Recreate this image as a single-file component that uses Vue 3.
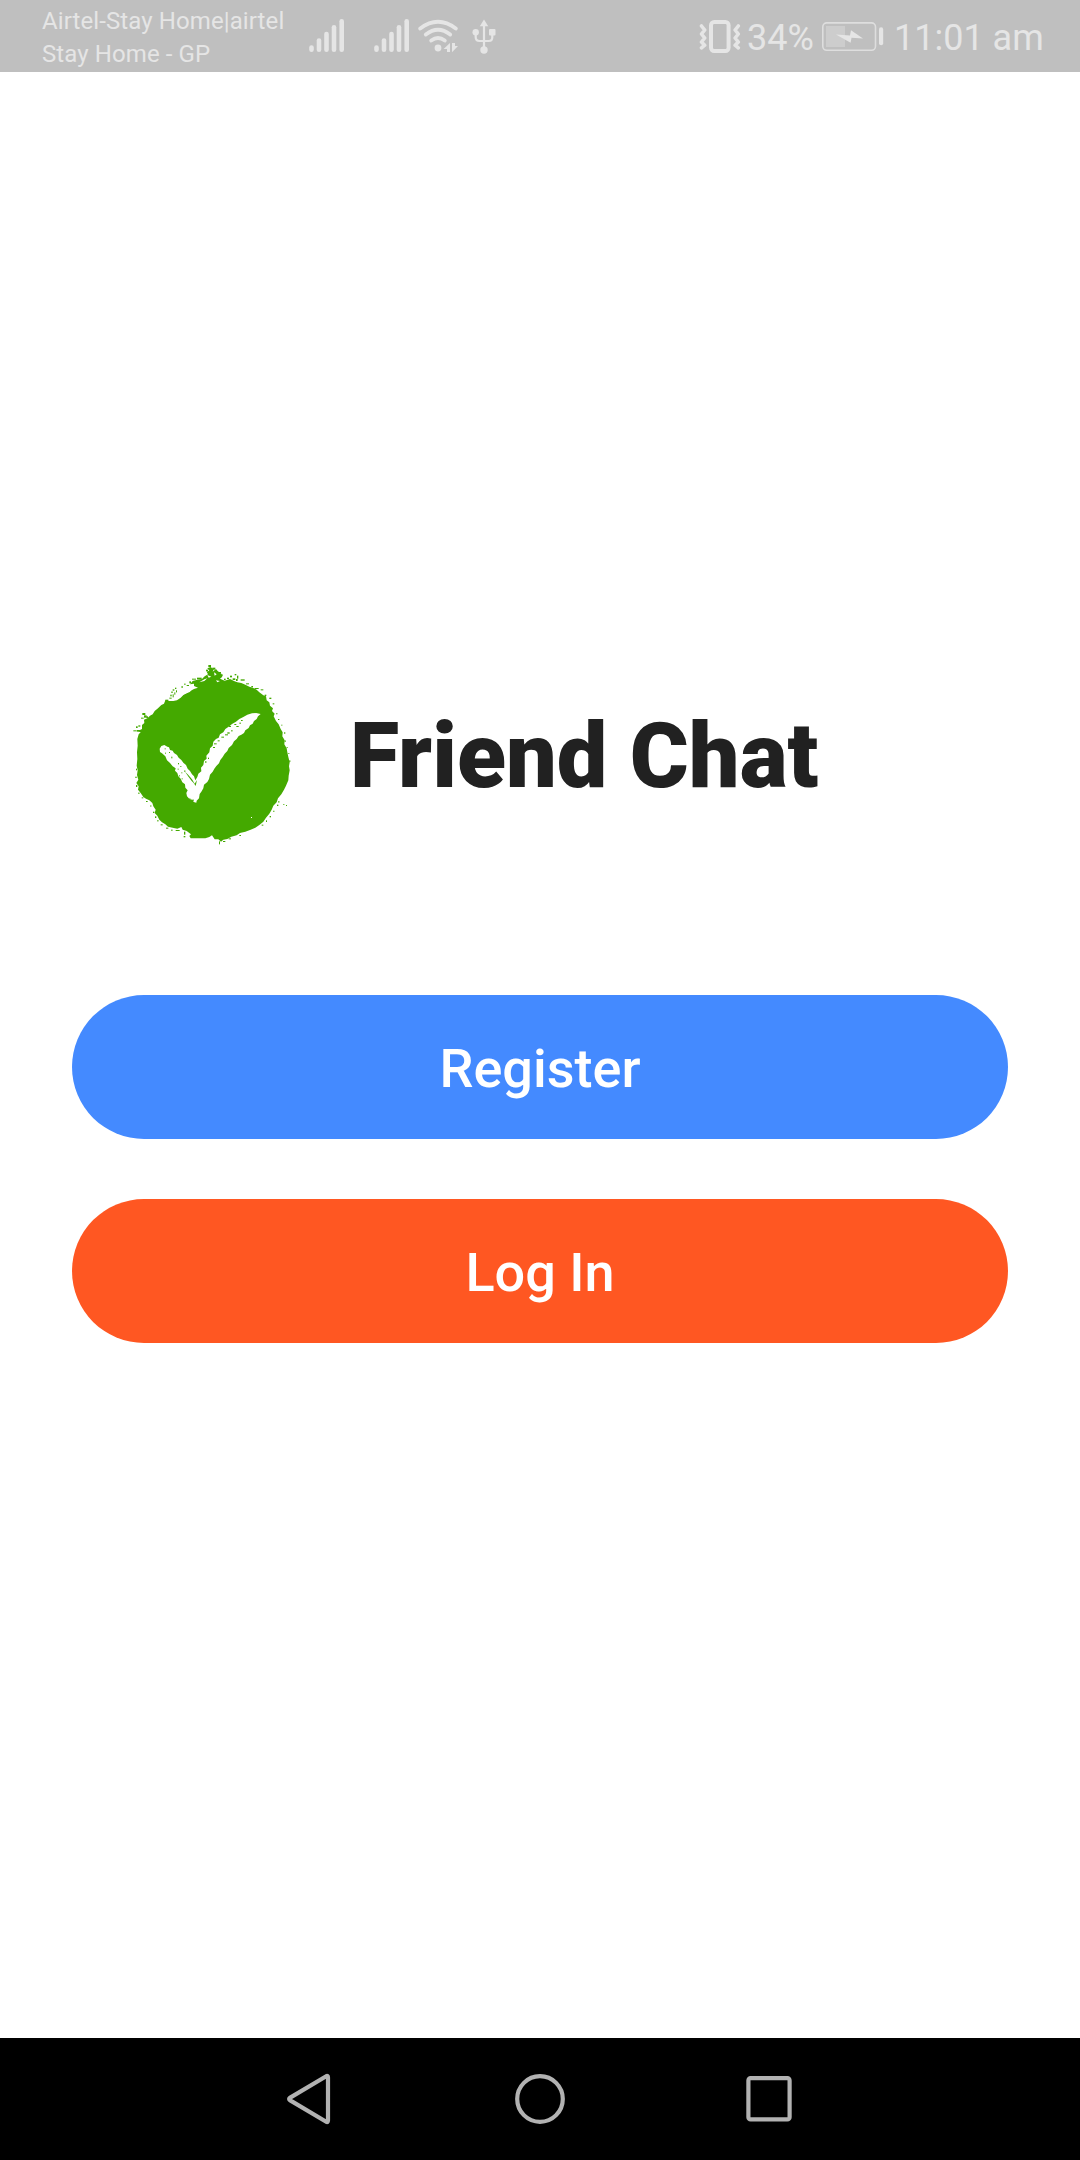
<script setup>
const signalBars = [
  { x: 2.5, top: 47.5 },
  { x: 10, top: 40.5 },
  { x: 17.5, top: 34 },
  { x: 25, top: 27.2 },
  { x: 32.7, top: 21.2 },
]

// Paint specks around the brushed badge: x, y, width, height
const specks = [
  [265, 30, 8, 6], [277, 38, 9, 6], [258, 44, 6, 5], [344, 57, 5, 4], [351, 62, 4, 9],
  [330, 62, 6, 5], [362, 73, 12, 4], [378, 85, 9, 3], [394, 93, 5, 4], [404, 99, 12, 3],
  [422, 103, 8, 3], [434, 119, 5, 4], [448, 128, 6, 4], [458, 145, 5, 3], [184, 94, 5, 4],
  [192, 86, 5, 3], [200, 90, 7, 3], [216, 71, 12, 3], [231, 68, 14, 5], [208, 79, 5, 6],
  [153, 110, 6, 3], [158, 103, 5, 4], [165, 98, 4, 4], [151, 119, 4, 5], [148, 128, 7, 3],
  [136, 134, 9, 4], [158, 118, 3, 9], [163, 112, 3, 7], [168, 106, 3, 6], [67, 174, 9, 6],
  [72, 181, 8, 7], [63, 188, 8, 3], [79, 184, 5, 5], [48, 214, 5, 5], [40, 226, 9, 3],
  [50, 225, 10, 5], [55, 211, 6, 4], [492, 232, 4, 4], [494, 256, 3, 5], [500, 276, 3, 3],
  [505, 294, 3, 3], [508, 316, 3, 5], [48, 341, 3, 5], [46, 365, 4, 4], [48, 390, 4, 6],
  [54, 413, 5, 3], [65, 427, 5, 3], [78, 438, 5, 3], [91, 451, 3, 4], [99, 470, 4, 4],
  [105, 484, 4, 5], [111, 496, 5, 3], [122, 508, 6, 3], [138, 518, 7, 3], [153, 524, 5, 3],
  [167, 525, 12, 3], [192, 530, 4, 9], [191, 543, 5, 4], [297, 559, 3, 9], [309, 558, 7, 3],
  [326, 550, 7, 3], [358, 540, 5, 3], [425, 509, 5, 3], [438, 496, 3, 5], [449, 483, 4, 4],
  [460, 467, 3, 4], [471, 449, 4, 4], [475, 438, 3, 5], [490, 447, 3, 3], [498, 450, 3, 3],
  [469, 174, 3, 4], [474, 192, 4, 3], [484, 209, 3, 3], [297, 51, 6, 4], [303, 58, 5, 5],
  [312, 71, 5, 4], [321, 68, 6, 4], [338, 70, 8, 5], [348, 72, 5, 6],
]

// Dry-brush paint left inside the tick
const grain = [
  [134, 280, 3, 3], [135, 293, 3, 3], [147, 291, 3, 3], [154, 305, 3, 5], [174, 324, 3, 4],
  [181, 333, 3, 3], [173, 341, 3, 3], [184, 352, 3, 3], [193, 346, 3, 5], [177, 361, 3, 3],
  [185, 370, 3, 3], [208, 430, 3, 5], [218, 434, 4, 3],
  [256, 318, 3, 6], [264, 308, 3, 4], [279, 276, 6, 3], [282, 265, 8, 3],
  [293, 256, 6, 3], [304, 245, 8, 3], [315, 238, 9, 3], [322, 232, 7, 4], [333, 226, 5, 3],
  [327, 213, 6, 3], [343, 207, 6, 3], [349, 213, 7, 3], [358, 203, 5, 3], [363, 195, 5, 3],
]
</script>

<template>
  <div class="screen">
    <header class="status">
      <div class="carrier">Airtel-Stay Home|airtel<br />Stay Home - GP</div>
      <svg class="signal" width="38" height="72" viewBox="0 0 38 72">
        <line v-for="b in signalBars" :key="b.x" :x1="b.x" :x2="b.x" :y1="b.top" y2="49.8" />
      </svg>
      <svg class="signal second" width="38" height="72" viewBox="0 0 38 72">
        <line v-for="b in signalBars" :key="b.x" :x1="b.x" :x2="b.x" :y1="b.top" y2="49.8" />
      </svg>
      <svg class="wifi" width="42" height="72" viewBox="0 0 42 72">
        <g fill="none" stroke="#e5e5e5" stroke-width="3.8" stroke-linecap="round">
          <path d="M2.2 28.5Q20 15 37.8 28.5" />
          <path d="M7.8 34.5Q20 25 32.2 34.5" />
          <path d="M13.2 40.5Q20 35.5 26.8 40.5" />
        </g>
        <circle cx="20" cy="48" r="3.4" fill="#e5e5e5" />
        <path d="M32 43v9h-3v-3H25.6zM34 43h3v3H40l-6 6.2z" fill="#e5e5e5" />
      </svg>
      <svg class="usb" width="24" height="72" viewBox="0 0 24 72">
        <path d="M12 19.5l4.2 6.8H7.8z" fill="#e5e5e5" />
        <path d="M12 25v24M3.7 33v4.2q0 3.8 4 3.8h9q3.6 0 3.6-3.8V33" fill="none" stroke="#e5e5e5" stroke-width="2.2" />
        <circle cx="12" cy="50" r="3.7" fill="#e5e5e5" />
        <circle cx="3.7" cy="32.2" r="3.2" fill="#e5e5e5" />
        <rect x="17" y="29" width="6.5" height="6.5" rx="1" fill="#e5e5e5" />
      </svg>
      <div class="right">
        <svg class="vibrate" width="48" height="72" viewBox="0 0 48 72">
          <rect x="12" y="22" width="17.6" height="29" rx="3.2" fill="none" stroke="#e5e5e5" stroke-width="4" />
          <path d="M2.5 26l3.2 4-3.2 4 3.2 4-3.2 4 3.2 3.2-3.2 2.6M39.3 26l-3.2 4 3.2 4-3.2 4 3.2 4-3.2 3.2 3.2 2.6" fill="none" stroke="#e5e5e5" stroke-width="3.6" stroke-linecap="round" stroke-linejoin="round" />
        </svg>
        <span class="percent">34%</span>
        <svg class="battery" width="62" height="72" viewBox="0 0 62 72">
          <rect x="0.8" y="22.9" width="52.7" height="27.4" rx="4" fill="none" stroke="#dedede" stroke-width="1.6" />
          <rect x="4" y="26" width="19" height="21" fill="#cdcdcd" />
          <path d="M14 34.5l14 1 1-5.3 12 8.3-11.5-.7-.9 5z" fill="#e5e5e5" />
          <rect x="57" y="27.3" width="4.2" height="18" rx="2.1" fill="#e5e5e5" />
        </svg>
        <span class="clock">11:01 am</span>
      </div>
    </header>

    <main class="welcome">
      <div class="brand">
        <svg class="badge" width="180" height="200" viewBox="0 0 540 600">
          <path
            fill="#44a900"
            d="M262 40L272 36 281 43 278 50 288 42 293 48 304 56 307 65 300 71 314 77 330 72 342 78 352 82 364 84 376 89 388 95 398 98 410 104 418 112 430 121 438 124 440 136 448 142 450 152 459 160 456 168 464 176 461 184 468 198 476 208 482 222 488 232 487 244 494 256 493 268 500 280 502 292 505 306 509 322 507 334 509 346 506 362 505 376 498 392 492 404 484 418 474 430 470 442 460 452 455 464 448 476 438 488 430 500 418 510 406 518 392 524 376 530 360 534 350 541 334 545 322 552 310 554 303 560 295 553 284 553 276 541 268 546 256 550 212 550 208 543 213 538 200 528 188 524 184 516 172 521 158 518 144 515 136 508 126 502 118 494 112 482 104 474 107 464 100 454 97 444 88 436 78 431 70 426 62 414 54 404 56 394 49 384 55 374 51 360 53 346 50 332 52 312 51 292 53 272 52 252 56 238 62 232 54 228 66 222 66 210 73 204 72 194 82 190 90 182 98 178 104 168 114 160 124 150 132 146 136 136 148 138 160 138 171 136 182 128 190 120 204 112 214 106 224 101 234 98 222 93 222 86 210 88 218 78 232 74 246 72 254 64 264 58 260 50 268 47z"
          />
          <path
            fill="#fff"
            d="M119 281L124 273 133 270 142 275 147 277 150 285 158 287 162 294 171 300 176 308 184 315 190 323 198 330 203 341 210 348 216 358 222 364 226 376 232 366 235 356 244 349 243 338 250 330 252 318 260 311 259 302 268 292 270 280 278 272 280 260 288 252 296 248 300 238 310 232 316 222 328 214 336 207 348 200 358 192 370 186 382 179 396 175 408 174 422 177 414 184 410 192 402 198 398 206 390 211 386 219 376 226 372 234 364 239 356 243 350 252 342 259 336 270 326 279 322 288 314 296 308 306 301 315 297 325 289 333 283 341 278 350 270 359 267 372 262 381 252 389 250 400 244 410 239 417 237 430 230 437 229 443 221 441 218 434 209 433 201 424 199 414 203 406 196 398 195 388 187 382 182 371 175 364 172 354 165 347 167 340 158 334 150 324 141 316 136 304 126 295 120 291z"
          />
          <path d="M195 350L203 358 216 373 224 386 231 375 227 393 221 384 215 378 206 366z" fill="#44a900" />
          <path d="M171 129L205 108 221 100 209 111 189 119 175 131z" fill="#fff" />
          <path d="M238 82L253 73 262 70 253 78zM288 76L300 78 292 82zM262 60L274 65 266 68zM282 52L290 58 284 62z" fill="#fff" />
          <rect v-for="(s, i) in specks" :key="'s' + i" :x="s[0]" :y="s[1]" :width="s[2]" :height="s[3]" fill="#44a900" />
          <rect v-for="(s, i) in grain" :key="'g' + i" :x="s[0]" :y="s[1]" :width="s[2]" :height="s[3]" fill="#44a900" />
          <rect x="393" y="486" width="3" height="3" fill="#fff" />
        </svg>
        <h1 class="title">Friend Chat</h1>
      </div>
      <button class="action register">Register</button>
      <button class="action login">Log In</button>
    </main>

    <nav class="navbar">
      <svg width="55" height="56" viewBox="0 0 55 56">
        <path d="M42.2 5.2L6.2 26.6Q4 28 6.2 29.4L42.2 50.8Q44 51.6 44 49.6V6.4Q44 4.4 42.2 5.2z" />
      </svg>
      <svg width="56" height="56" viewBox="0 0 56 56"><circle cx="28" cy="28" r="22.8" /></svg>
      <svg width="56" height="56" viewBox="0 0 56 56"><rect x="7.4" y="7.2" width="41.2" height="41.2" rx="2.2" /></svg>
    </nav>
  </div>
</template>

<style>
body {
  margin: 0;
  background: #fff;
}
</style>

<style scoped>
.screen {
  width: 1080px;
  height: 2160px;
  display: flex;
  flex-direction: column;
  background: #fff;
  font-family: Roboto, "Noto Sans", sans-serif;
  overflow: hidden;
}
.status {
  height: 72px;
  flex: none;
  display: flex;
  box-sizing: border-box;
  padding: 0 35px 0 42px;
  background: #bfbfbf;
  color: #e5e5e5;
}
.status svg {
  flex: none;
}
.carrier {
  width: 267px;
  padding-top: 5px;
  font-size: 24px;
  line-height: 33px;
  letter-spacing: 0.1px;
  white-space: nowrap;
}
.signal {
  stroke: #e5e5e5;
  stroke-width: 4.6;
  stroke-linecap: round;
}
.second {
  margin-left: 27px;
}
.wifi {
  margin-left: 6px;
}
.usb {
  margin-left: 12px;
}
.right {
  display: flex;
  margin-left: auto;
  font-size: 36px;
  line-height: 76px;
  white-space: nowrap;
}
.percent {
  width: 75px;
}
.clock {
  margin-left: 10px;
  width: 151px;
}
.welcome {
  flex: 1;
  display: flex;
  flex-direction: column;
  padding: 583px 72px 0;
}
.brand {
  display: flex;
  align-items: center;
  height: 200px;
  padding-left: 48px;
}
.badge {
  flex: none;
}
.title {
  margin: 0 0 0 50px;
  padding-top: 4px;
  color: #212121;
  font-size: 90px;
  line-height: 106px;
  font-weight: 900;
  white-space: nowrap;
}
.action {
  height: 144px;
  padding: 3px 0 0;
  border: 0;
  border-radius: 72px;
  color: #fff;
  font: 500 54px/64px Roboto, "Noto Sans", sans-serif;
}
.register {
  margin-top: 140px;
  background: #448aff;
}
.login {
  margin-top: 60px;
  background: #ff5722;
}
.navbar {
  height: 122px;
  flex: none;
  display: flex;
  justify-content: space-between;
  align-items: center;
  box-sizing: border-box;
  padding: 0 283px 0 284px;
  background: #000;
}
.navbar svg {
  fill: none;
  stroke: #b2b2b2;
  stroke-width: 4.2;
  stroke-linejoin: round;
}
</style>
